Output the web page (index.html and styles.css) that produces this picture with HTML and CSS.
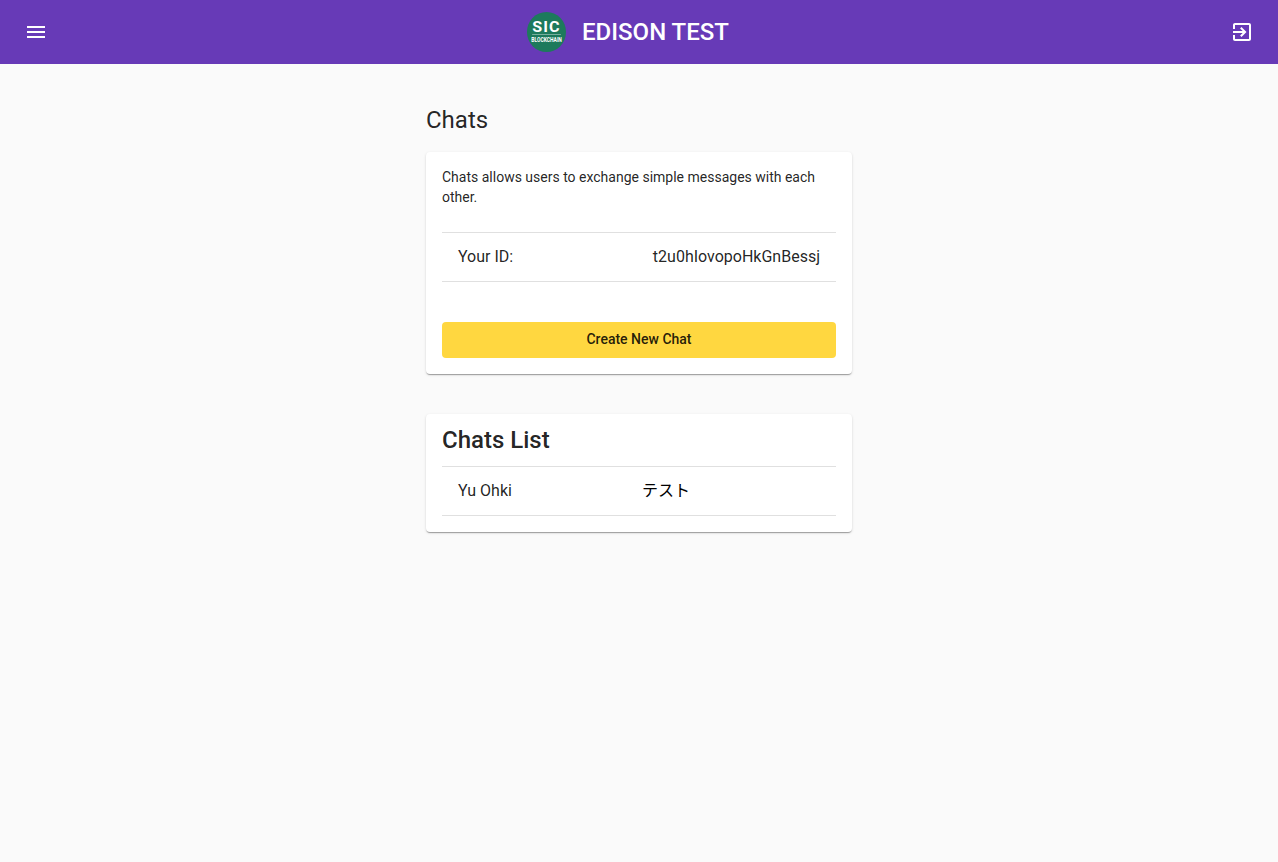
FILE: index.html
```html
<!DOCTYPE html>
<html lang="en">
<head>
    <meta charset="UTF-8">
    <meta name="viewport" content="width=device-width, initial-scale=1.0">
    <title>Chats</title>
    <link rel="stylesheet" href="styles.css">
</head>
<body>
    <header class="toolbar">
        <button class="icon-button" type="button" aria-label="Menu">
            <svg viewBox="0 0 24 24" width="24" height="24"><path d="M3 18h18v-2H3v2zm0-5h18v-2H3v2zm0-7v2h18V6H3z"/></svg>
        </button>
        <div class="brand">
            <div class="logo">
                <span class="logo-sic">SIC</span>
                <span class="logo-sub">BLOCKCHAIN</span>
            </div>
            <span class="brand-name">EDISON TEST</span>
        </div>
        <button class="icon-button" type="button" aria-label="Log out">
            <svg viewBox="0 0 24 24" width="24" height="24"><path d="M10.09 15.59L11.5 17l5-5-5-5-1.41 1.41L12.67 11H3v2h9.67l-2.58 2.59zM19 3H5c-1.11 0-2 .9-2 2v4h2V5h14v14H5v-4H3v4c0 1.1.89 2 2 2h14c1.1 0 2-.9 2-2V5c0-1.1-.9-2-2-2z"/></svg>
        </button>
    </header>

    <main class="content">
        <h1 class="page-title">Chats</h1>

        <section class="card">
            <p class="intro">Chats allows users to exchange simple messages with each other.</p>
            <div class="row row-first row-spread">
                <span>Your ID:</span>
                <span>t2u0hIovopoHkGnBessj</span>
            </div>
            <button class="create-button" type="button">Create New Chat</button>
        </section>

        <section class="card card-list">
            <h2 class="card-title">Chats List</h2>
            <div class="row row-first row-columns">
                <span>Yu Ohki</span>
                <span class="message">テスト</span>
            </div>
        </section>
    </main>
</body>
</html>
```

FILE: styles.css
```css
body {
    font-family: Roboto, "Noto Sans CJK JP", sans-serif;
    margin: 0;
    padding: 0;
    background-color: #fafafa;
    color: rgba(0, 0, 0, 0.87);
}

.toolbar {
    height: 64px;
    padding: 0 16px;
    box-sizing: border-box;
    display: flex;
    align-items: center;
    justify-content: space-between;
    background-color: #673ab7;
    color: white;
}

.icon-button {
    width: 40px;
    height: 40px;
    padding: 8px;
    border: none;
    background: none;
    cursor: pointer;
}

.icon-button svg {
    display: block;
    fill: white;
}

.brand {
    display: flex;
    align-items: center;
    gap: 16px;
    margin-right: 22px;
}

.logo {
    width: 39px;
    height: 40px;
    border-radius: 50%;
    background-color: #1d7a5c;
    display: flex;
    flex-direction: column;
    align-items: center;
    justify-content: center;
    overflow: hidden;
    color: white;
    font-weight: 700;
}

.logo-sic {
    font-size: 14px;
    line-height: 13px;
    letter-spacing: 1px;
    transform: scaleX(1.15);
    border-bottom: 1px solid rgba(255, 255, 255, 0.4);
}

.logo-sub {
    margin-top: 1px;
    font-size: 8px;
    line-height: 8px;
    white-space: nowrap;
    transform: scaleX(0.62);
}

.brand-name {
    font-size: 24px;
    font-weight: 500;
    line-height: 32px;
}

.content {
    width: 426px;
    margin: 0 auto;
    padding: 40px 0;
}

.page-title {
    margin: 0 0 16px;
    font-size: 24px;
    font-weight: 400;
    line-height: 32px;
}

.card {
    padding: 15px 16px 16px;
    background-color: white;
    border-radius: 4px;
    box-shadow: 0 2px 1px -1px rgba(0, 0, 0, 0.2), 0 1px 1px 0 rgba(0, 0, 0, 0.14), 0 1px 3px 0 rgba(0, 0, 0, 0.12);
}

.card-list {
    margin-top: 40px;
    padding-top: 10px;
}

.card-title {
    margin: 0 0 10px;
    font-size: 24px;
    font-weight: 500;
    line-height: 32px;
}

.intro {
    margin: 0 0 25px;
    font-size: 14px;
    line-height: 20px;
}

.row {
    height: 49px;
    padding: 0 16px 2px;
    box-sizing: border-box;
    border-bottom: 1px solid #e0e0e0;
    font-size: 16px;
}

.row-first {
    height: 50px;
    border-top: 1px solid #e0e0e0;
}

.row-spread {
    display: flex;
    align-items: center;
    justify-content: space-between;
}

.row-columns {
    display: grid;
    grid-template-columns: 184px 1fr;
    align-items: center;
}

.message {
    padding-bottom: 3px;
    color: #000;
}

.create-button {
    display: block;
    width: 100%;
    height: 36px;
    margin-top: 40px;
    padding: 0 0 2px;
    border: none;
    border-radius: 4px;
    background-color: #ffd740;
    color: rgba(0, 0, 0, 0.87);
    font-family: inherit;
    font-size: 14px;
    font-weight: 500;
    cursor: pointer;
}
```
